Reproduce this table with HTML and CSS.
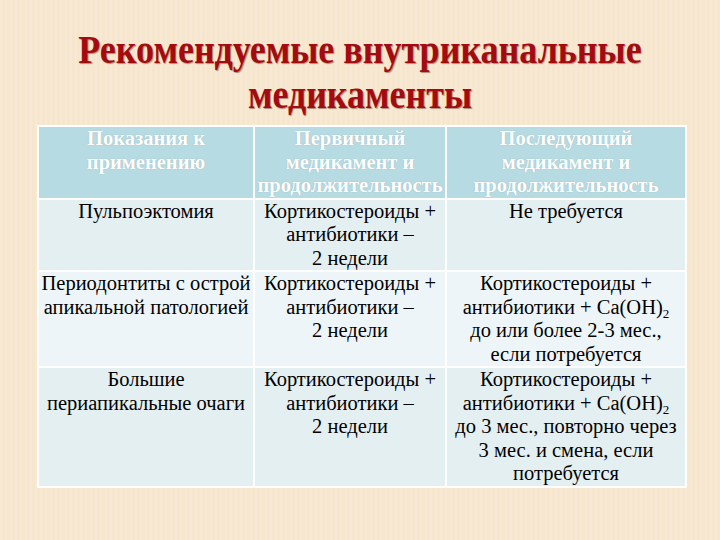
FILE: index.html
```html
<!DOCTYPE html>
<html>
<head>
<meta charset="utf-8">
<link rel="stylesheet" href="styles.css">
</head>
<body>
<div class="slide">
  <h1 class="title"><span class="title-text">Рекомендуемые внутриканальные<br>медикаменты</span></h1>
  <table class="grid">
    <colgroup>
      <col class="c1"><col class="c2"><col class="c3">
    </colgroup>
    <thead>
      <tr>
        <th>Показания к<br>применению</th>
        <th>Первичный<br>медикамент и<br>продолжительность</th>
        <th>Последующий<br>медикамент и<br>продолжительность</th>
      </tr>
    </thead>
    <tbody>
      <tr class="odd">
        <td>Пульпоэктомия</td>
        <td>Кортикостероиды +<br>антибиотики –<br>2 недели</td>
        <td>Не требуется</td>
      </tr>
      <tr class="even">
        <td>Периодонтиты с острой<br>апикальной патологией</td>
        <td>Кортикостероиды +<br>антибиотики –<br>2 недели</td>
        <td>Кортикостероиды +<br>антибиотики + Ca(OH)<sub>2</sub><br>до или более 2-3 мес.,<br>если потребуется</td>
      </tr>
      <tr class="odd">
        <td>Большие<br>периапикальные очаги</td>
        <td>Кортикостероиды +<br>антибиотики –<br>2 недели</td>
        <td>Кортикостероиды +<br>антибиотики + Ca(OH)<sub>2</sub><br>до 3 мес., повторно через<br>3 мес. и смена, если<br>потребуется</td>
      </tr>
    </tbody>
  </table>
</div>
</body>
</html>
```

FILE: styles.css
```css
html, body {
  margin: 0;
  padding: 0;
}
body {
  width: 720px;
  height: 540px;
  overflow: hidden;
  background-color: #f6e6cd;
  background-image: repeating-linear-gradient(90deg, rgba(255,255,255,0.12) 0px, rgba(255,255,255,0.12) 2px, rgba(255,255,255,0) 2px, rgba(255,255,255,0) 5px);
  font-family: "Liberation Serif", serif;
}
.slide {
  display: flex;
  flex-direction: column;
  align-items: flex-start;
}
.title {
  align-self: stretch;
  margin: 27px 0 0 0;
  height: 98px;
  text-align: center;
  font-family: "Liberation Serif", serif;
  font-size: 40px;
  line-height: 45px;
  font-weight: bold;
  color: #a30b10;
  text-shadow: 1px 1px 1px rgba(60,0,0,0.4);
}
.title-text {
  display: inline-block;
  transform: scaleX(0.9);
  transform-origin: center;
}
.grid {
  margin-left: 37px;
  width: 648px;
  border-collapse: collapse;
  table-layout: fixed;
  font-family: "Liberation Serif", serif;
  font-size: 20.5px;
  line-height: 23.5px;
  color: #000;
}
.c1 { width: 216px; }
.c2 { width: 192px; }
.c3 { width: 240px; }
.grid th, .grid td {
  border: 2px solid #ffffff;
  padding: 0 1px;
  text-align: center;
  vertical-align: top;
  white-space: nowrap;
}
.grid th {
  background: #b7dbe2;
  color: #ffffff;
  font-weight: bold;
  text-shadow: 0 0 1px rgba(90,120,130,0.45);
}
.odd td { background: #e4eff2; }
.even td { background: #eef5f8; }
sub {
  font-size: 13px;
  line-height: 0;
  vertical-align: -4px;
}
```
